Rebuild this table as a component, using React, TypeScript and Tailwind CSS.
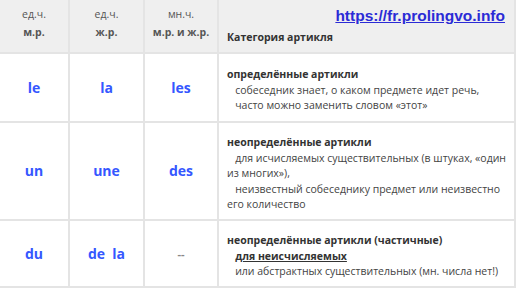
const rows = [
  {
    m: 'le',
    f: 'la',
    pl: 'les',
    body: (
      <>
        <b className="font-bold text-[#333]">определённые артикли</b>
        <br />
        &nbsp;&nbsp; собеседник знает, о каком предмете идет речь,
        <br />
        &nbsp;&nbsp; часто можно заменить словом «этот»
      </>
    ),
    h: 'h-[69px]',
  },
  {
    m: 'un',
    f: 'une',
    pl: 'des',
    body: (
      <>
        <b className="font-bold text-[#333]">неопределённые артикли</b>
        <br />
        &nbsp;&nbsp; для исчисляемых существительных (в штуках, «один из многих»),
        <br />
        &nbsp;&nbsp; неизвестный собеседнику предмет или неизвестно его количество
      </>
    ),
    h: 'h-[98px]',
  },
  {
    m: 'du',
    f: 'de\u00a0 la',
    pl: '--',
    body: (
      <>
        <b className="font-bold text-[#333]">неопределённые артикли (частичные)</b>
        <br />
        &nbsp;&nbsp; <b className="font-bold text-[#333] underline">для неисчисляемых</b>
        <br />
        &nbsp;&nbsp; или абстрактных существительных (мн. числа нет!)
      </>
    ),
    h: 'h-[67px]',
  },
];

export default function App() {
  return (
    <div className="relative w-[516px] h-[290px] bg-white font-['Open_Sans',sans-serif] text-[#444] overflow-hidden">
      <table className="w-[516px] table-fixed border-collapse text-[10.5px] leading-[15.5px]">
        <thead>
          <tr className="h-[53px] bg-[#efefef] leading-[18px]">
            <th className="w-[69px] border-x-2 border-b-2 border-[#e4e4e4] border-l-0 pt-[5px] align-top text-center font-normal text-[#555]">
              ед.ч.
              <br />
              <b className="font-bold">м.р.</b>
            </th>
            <th className="w-[75px] border-x-2 border-b-2 border-[#e4e4e4] pt-[5px] align-top text-center font-normal text-[#555]">
              ед.ч.
              <br />
              <b className="font-bold">ж.р.</b>
            </th>
            <th className="w-[74px] border-x-2 border-b-2 border-[#e4e4e4] pt-[5px] align-top text-center font-normal text-[#555]">
              мн.ч.
              <br />
              <b className="font-bold">м.р. и ж.р.</b>
            </th>
            <th className="border-x-2 border-b-2 border-[#e4e4e4] pl-2 pt-[28px] align-top text-left font-bold text-[#333]">
              Категория артикля
            </th>
          </tr>
        </thead>
        <tbody>
          {rows.map((r) => (
            <tr key={r.m} className={r.h}>
              <td className="border-x-2 border-b-2 border-[#e4e4e4] border-l-0 text-center text-[14px] font-bold text-[#3557ff]">
                {r.m}
              </td>
              <td className="border-x-2 border-b-2 border-[#e4e4e4] text-center text-[14px] font-bold text-[#3557ff] whitespace-pre">
                {r.f}
              </td>
              <td
                className={`border-x-2 border-b-2 border-[#e4e4e4] text-center font-bold ${
                  r.pl === '--' ? 'text-[11px] text-[#888]' : 'text-[14px] text-[#3557ff]'
                }`}
              >
                {r.pl}
              </td>
              <td className="border-x-2 border-b-2 border-[#e4e4e4] px-2 pt-[9px] pb-[3px] align-middle">{r.body}</td>
            </tr>
          ))}
        </tbody>
      </table>
      <a
        href="#"
        className="absolute right-[11px] top-[4px] text-[15.5px] font-bold text-[#2b2bd6] underline font-['Liberation_Sans',sans-serif]"
      >
        https://fr.prolingvo.info
      </a>
    </div>
  );
}
